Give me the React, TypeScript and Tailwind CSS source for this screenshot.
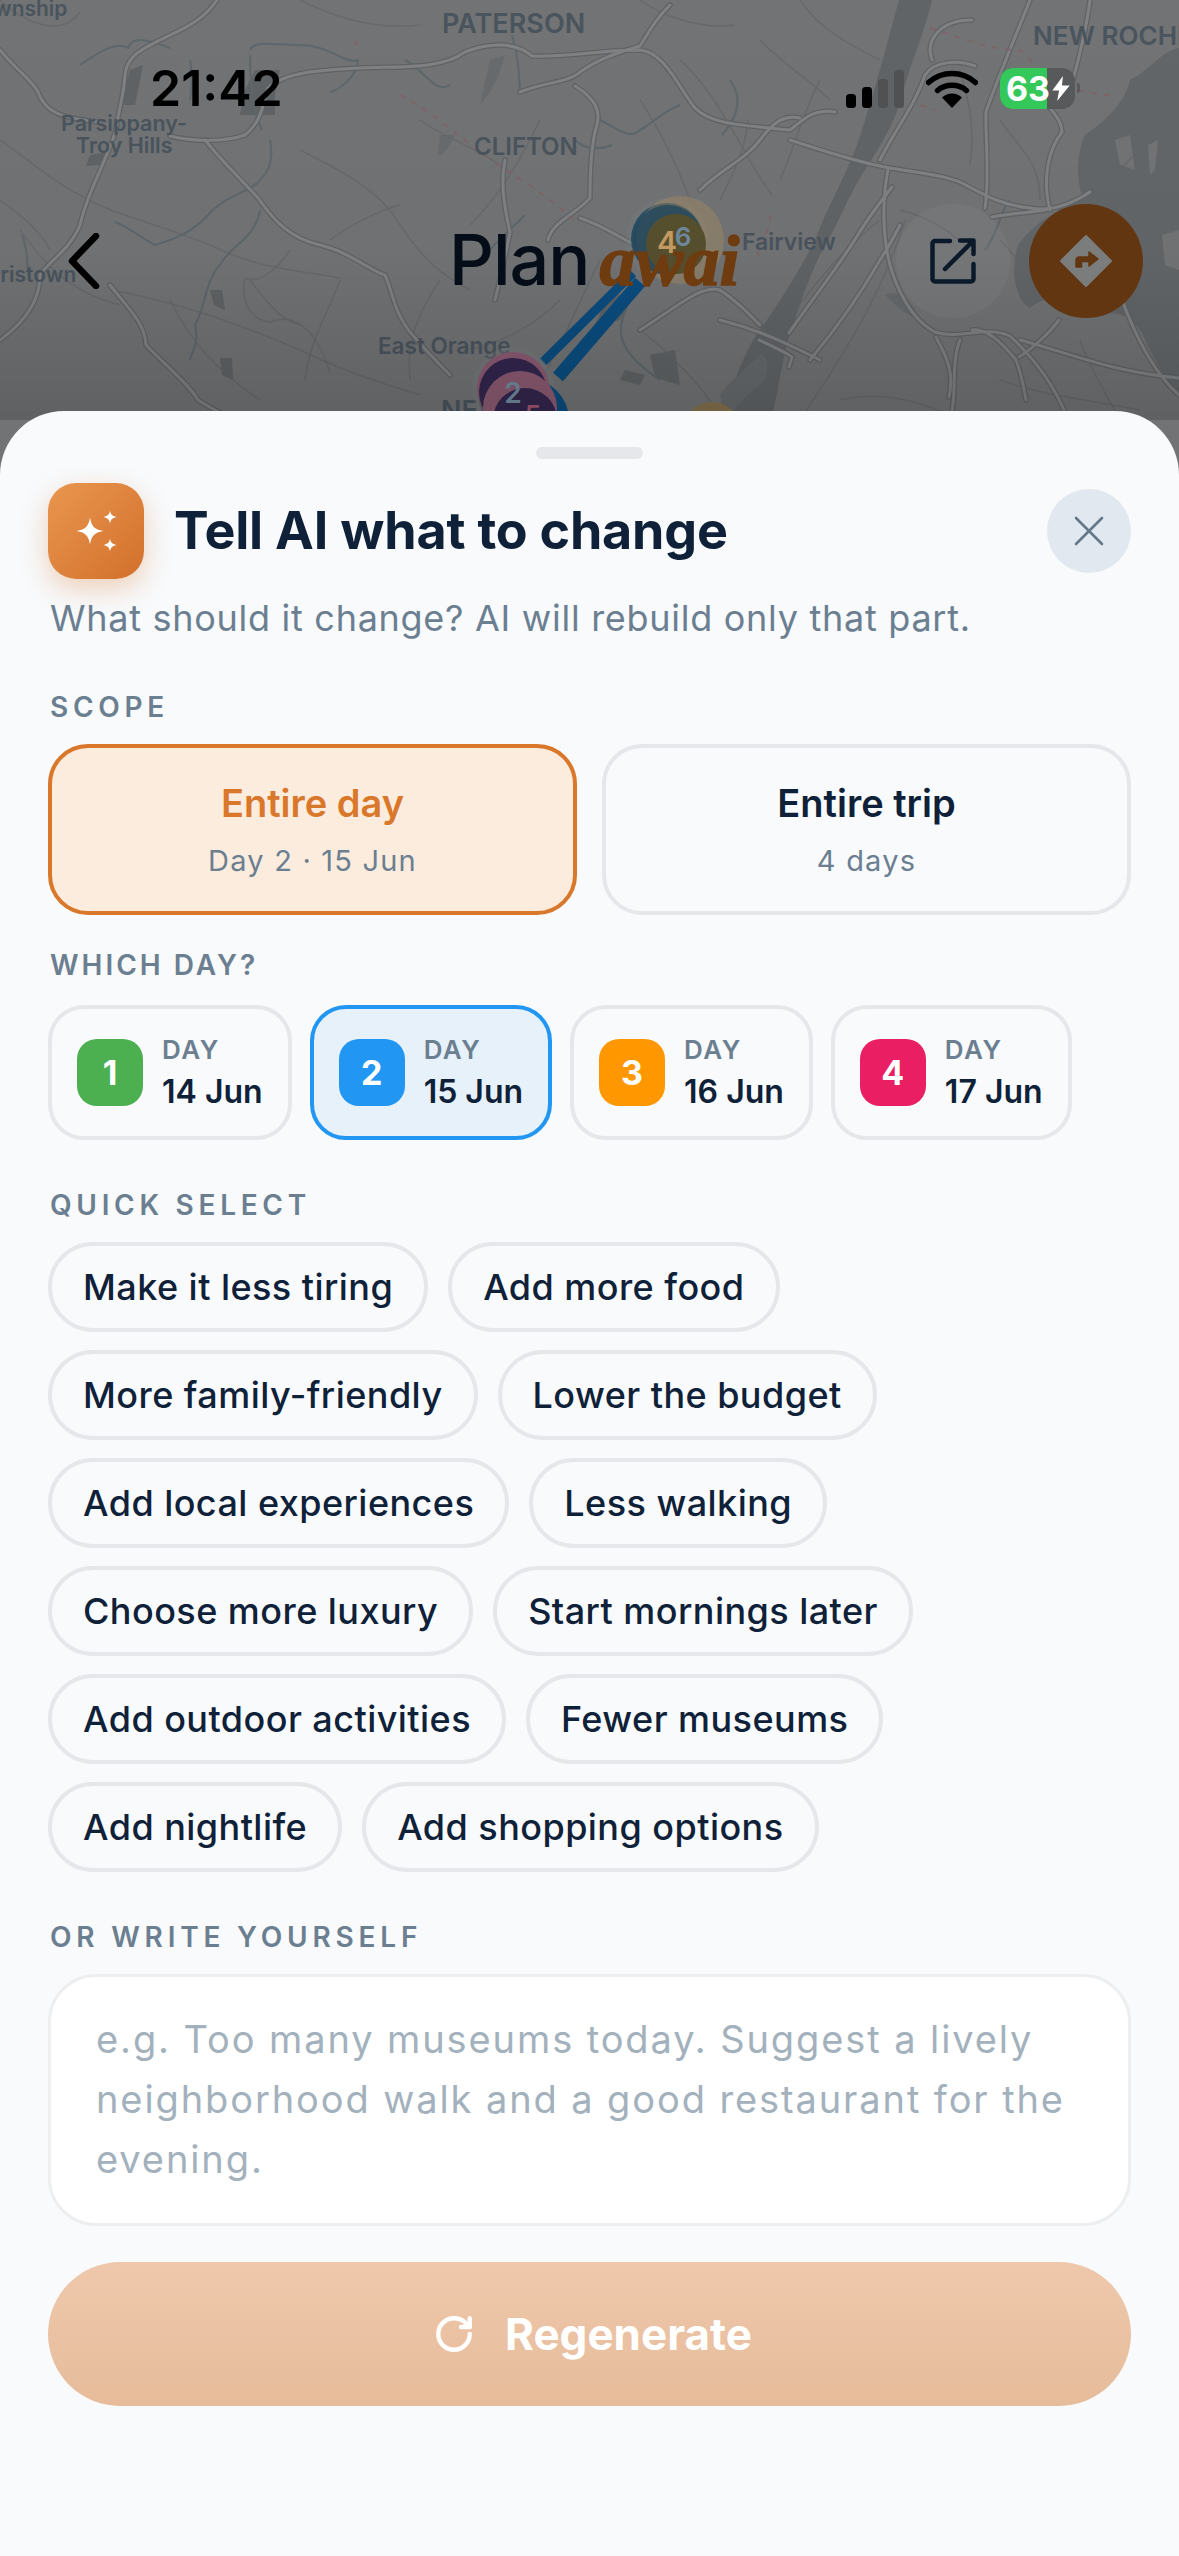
import { RotateCw, X } from 'lucide-react';

const font = { fontFamily: 'Inter, "Noto Sans", sans-serif' };

const days = [
  { n: 1, date: '14 Jun', badge: 'bg-[#4CAF50]' },
  { n: 2, date: '15 Jun', badge: 'bg-[#2196F3]', active: true },
  { n: 3, date: '16 Jun', badge: 'bg-[#FF9800]' },
  { n: 4, date: '17 Jun', badge: 'bg-[#E91E63]' },
];

const chips = [
  'Make it less tiring',
  'Add more food',
  'More family-friendly',
  'Lower the budget',
  'Add local experiences',
  'Less walking',
  'Choose more luxury',
  'Start mornings later',
  'Add outdoor activities',
  'Fewer museums',
  'Add nightlife',
  'Add shopping options',
];

// highways, drawn twice for the casing
const majorRoads = [
  'M217 0C205 18 190 26 160 40C140 50 127 56 125 75C124 95 118 112 116 130C105 165 88 190 80 225C70 250 48 262 40 275C40 300 25 322 0 340',
  'M0 50C18 72 32 80 38 92C45 112 60 118 100 122',
  'M170 136C195 142 225 142 245 135C262 122 264 100 268 88C285 72 320 70 360 68C400 66 440 70 465 52C490 42 515 42 532 56C560 58 600 50 640 50C665 52 680 90 695 108C710 124 740 125 790 130C805 118 815 108 835 112',
  'M205 140C225 165 240 178 258 198C275 222 290 238 320 245C350 252 372 272 385 275C392 290 394 312 410 332C425 350 445 370 450 375',
  'M110 285C125 305 145 322 146 345C165 365 190 385 198 400C210 408 220 412 232 420',
  'M520 92C545 82 570 82 580 72C600 58 620 52 640 46C650 30 655 20 670 5',
  'M575 86C595 98 602 112 596 128C590 150 590 180 590 198C575 215 552 222 548 240',
  'M505 160C500 185 505 210 510 232C505 260 500 280 495 300',
  'M580 218C610 228 630 245 650 252',
  'M790 140C815 148 850 160 880 166C905 172 935 172 960 182C985 195 1000 205 1030 208C1050 212 1070 205 1090 192',
  'M880 160C895 130 915 105 925 75C935 60 960 60 975 66',
  'M888 170C882 200 882 240 892 272C900 295 912 320 935 332C960 340 985 325 1010 336C1035 360 1055 385 1068 420',
  'M985 208C990 175 985 135 986 112C995 85 1010 50 1030 0',
  'M1050 210C1042 180 1048 150 1062 132C1062 120 1052 112 1048 105',
  'M700 190C720 170 745 160 760 140C775 120 785 115 800 118',
  'M720 320C760 330 790 345 820 360',
  'M960 340C950 365 958 395 950 420',
  'M1122 300C1135 335 1155 375 1179 395',
  'M1020 340C1060 350 1110 372 1179 378',
  'M932 60C925 40 940 20 972 20',
  'M992 217C1010 214 1030 212 1046 210',
  'M936 337C945 355 955 370 949 397',
  'M972 330C985 328 1000 340 1016 360C1022 375 1024 390 1026 400',
  'M1019 357C1030 350 1048 335 1059 320',
  'M759 340C770 345 785 352 792 357L789 367',
  'M789 333C815 295 840 265 859 233C870 215 882 200 892 187',
  'M810 360C835 330 860 295 880 260C890 245 895 235 900 225',
  'M640 330C680 305 700 285 720 290C735 300 745 310 760 325',
  'M1090 0C1085 40 1075 70 1068 100',
];

const minorRoads = [
  'M0 140C30 160 50 180 80 195C100 210 160 225 210 245C260 270 300 270 340 278',
  'M110 290C170 300 230 320 300 350C330 365 370 380 420 395',
  'M245 278C240 300 250 320 270 322C300 310 320 340 330 372',
  'M290 250C280 265 262 285 245 278',
  'M680 60C720 95 745 160 772 195',
  'M600 260C580 300 560 350 535 390',
  'M640 330C660 345 710 390 720 420',
  'M820 80C800 120 790 160 780 180',
  'M760 360C800 300 840 250 880 220',
  'M800 420C840 360 880 300 905 220',
  'M1000 240C1020 260 1040 290 1045 300',
  'M1000 120C1020 150 1040 160 1040 200',
  'M1080 340C1090 370 1110 400 1120 420',
  'M0 0C20 20 60 40 80 12',
  'M300 0C340 20 380 30 420 25',
  'M440 280C420 310 405 340 410 380',
  'M20 230C35 250 60 290 120 305',
  'M840 400C880 390 920 400 960 420',
  'M300 150C340 170 380 190 400 225C420 255 440 275 470 290',
  'M330 240C350 225 380 210 400 205',
  'M250 280C265 300 280 320 300 325',
  'M340 280C325 320 310 340 305 380',
  'M420 120C440 135 470 145 500 165',
  'M640 100C660 130 675 160 690 200',
  'M720 200C735 170 745 150 748 120',
  'M760 40C790 70 810 80 830 100',
  'M800 0C820 30 850 45 880 60',
  'M960 70C970 105 975 130 970 165',
  'M900 210C920 215 945 225 970 250',
  'M1100 200C1110 175 1125 165 1140 150',
  'M1000 380C1040 395 1090 400 1140 410',
  'M640 0C660 15 700 30 735 25',
  'M540 120C525 150 505 190 470 225',
  'M0 200C15 210 40 230 50 250',
  'M170 300C190 340 215 370 260 400',
  'M560 300C530 330 495 345 465 350',
];

const rivers = [
  'M80 65C95 55 115 40 128 48C132 35 150 40 170 48',
  'M250 50C255 40 270 45 300 45C330 45 345 65 358 60C358 75 340 90 330 92',
  'M250 55C250 80 252 110 262 130',
  'M190 60C192 70 192 90 190 100',
  'M270 140C275 165 265 175 260 180C255 190 225 195 208 215C190 235 170 240 155 245C145 240 125 225 115 222',
  'M260 210C255 240 230 245 220 265C205 280 205 310 195 325C200 345 190 355 190 360',
  'M22 235C30 255 25 265 30 280',
  'M405 60C425 70 435 95 450 85',
  'M512 35C520 65 518 70 520 90',
  'M600 120C620 130 630 140 640 130C650 125 665 110 680 105',
  'M575 140C585 150 600 150 612 145',
  'M730 80C745 100 735 120 722 135',
  'M985 250C1000 230 1000 210 1010 200',
  'M525 215C510 230 498 240 480 260',
  'M630 300C615 330 615 350 660 380',
];

const dashes = [
  'M400 95C440 115 470 150 530 185C550 200 570 215 575 222',
  'M930 28C960 38 990 50 1020 50C1040 65 1040 85 1050 85C1080 90 1095 95 1110 95',
  'M355 40L358 48',
  'M770 215C770 240 750 255 760 255',
  'M920 105L935 110',
];

function MapBackdrop() {
  return (
    <svg viewBox="0 0 1179 420" className="absolute inset-0 w-[1179px] h-[420px]" style={font}>
      <defs>
        <linearGradient id="shade" x1="0" y1="0" x2="0" y2="1">
          <stop offset="0" stopColor="#000" stopOpacity="0" />
          <stop offset="0.6" stopColor="#000" stopOpacity="0.02" />
          <stop offset="1" stopColor="#000" stopOpacity="0.16" />
        </linearGradient>
      </defs>
      <rect width="1179" height="420" fill="#717375" />

      {/* Hudson and the sound */}
      <path
        fill="#606466"
        d="M899 0L932 0C925 30 912 60 905 85C898 115 885 140 868 165C848 195 838 225 820 255C805 285 795 320 785 350C780 380 775 400 772 420L722 420C732 385 745 350 760 330C778 305 800 270 815 240C830 200 850 170 862 130C875 90 888 40 899 0Z"
      />
      <path
        fill="#626668"
        d="M1179 48C1160 52 1150 70 1130 80C1125 105 1100 125 1085 135C1078 150 1075 175 1082 195C1072 205 1040 215 1018 245C1010 270 1015 300 1030 308C1050 290 1085 300 1100 310C1110 320 1130 300 1150 350C1160 370 1170 385 1179 395Z"
      />
      <path fill="#717375" d="M1115 140L1130 135L1135 170L1120 165ZM1148 145L1158 140L1155 170L1150 175ZM1179 230L1162 235L1165 265L1179 270Z" />
      <path fill="#5f6365" d="M130 70L143 65L135 105L120 105ZM255 70L280 70L275 95L275 115L240 115L245 90Z" />
      <path fill="#5f6365" d="M90 155L107 152L100 165L86 166ZM610 290L630 300L620 320L595 325ZM650 355L675 350L680 385L655 378ZM625 370L645 375L640 385L620 380Z" />
      <path fill="#5f6365" d="M210 290L222 290L225 310L214 305ZM220 358L232 358L233 380L222 375Z" />
      <path fill="#666a6c" d="M720 395C730 380 745 370 760 355C770 355 770 375 760 385C745 395 735 410 725 420Z" />
      <path fill="#666a6c" d="M885 295C895 290 910 295 920 320C905 315 895 305 885 295Z" />
      <path fill="#686b6d" d="M490 60L505 55C500 75 490 95 480 105ZM440 135L455 135C450 145 445 155 438 155Z" />

      {minorRoads.map(d => (
        <path key={d} d={d} fill="none" stroke="#64676a" strokeWidth="1.5" opacity="0.75" />
      ))}
      {rivers.map(d => (
        <path key={d} d={d} fill="none" stroke="#5d676c" strokeWidth="2" />
      ))}
      {majorRoads.map(d => (
        <path key={d} d={d} fill="none" stroke="#606366" strokeWidth="5.5" strokeLinecap="round" />
      ))}
      {majorRoads.map(d => (
        <path key={d} d={d} fill="none" stroke="#7f8183" strokeWidth="3" strokeLinecap="round" />
      ))}
      {dashes.map(d => (
        <path key={d} d={d} fill="none" stroke="#7f6468" strokeWidth="2" strokeDasharray="6 7" />
      ))}

      <g fill="#4a545d" fontWeight="600">
        <text x="-6" y="16" fontSize="21">wnship</text>
        <text x="442" y="33" fontSize="27">PATERSON</text>
        <text x="1033" y="45" fontSize="26">NEW ROCHE</text>
        <text x="930" y="0" fontSize="21">YONKERS</text>
        <text x="61" y="131" fontSize="21.500">Parsippany-</text>
        <text x="76" y="153" fontSize="21.500">Troy Hills</text>
        <text x="474" y="155" fontSize="24">CLIFTON</text>
        <text x="-8" y="282" fontSize="21">rristown</text>
        <text x="742" y="250" fontSize="23">Fairview</text>
        <text x="378" y="354" fontSize="22.500">East Orange</text>
        <text x="441" y="420" fontSize="27">NEWARK</text>
      </g>

      {/* route legs */}
      <path d="M543 362L633 273" stroke="#0a4d80" strokeWidth="9" />
      <path d="M558 377L640 282" stroke="#0a4d80" strokeWidth="13" />

      {/* upper stop cluster */}
      <circle cx="667" cy="239" r="41" fill="#7a7e80" opacity="0.35" />
      <circle cx="667" cy="239" r="36" fill="#294f66" />
      <circle cx="680" cy="240" r="44" fill="#b8925c" opacity="0.35" />
      <circle cx="668" cy="240" r="35" fill="#27495e" opacity="0.85" />
      <circle cx="676" cy="244" r="30" fill="#57502f" />
      <text x="683" y="246" fontSize="26" fontWeight="600" fill="#6f8ba0" textAnchor="middle">6</text>
      <text x="667" y="253" fontSize="30" fontWeight="600" fill="#c69c60" textAnchor="middle">4</text>

      {/* lower stop cluster */}
      <circle cx="712" cy="432" r="30" fill="#85704d" />
      <circle cx="513" cy="388" r="41" fill="#7a7e80" opacity="0.35" />
      <circle cx="513" cy="388" r="36" fill="#8b5a72" />
      <circle cx="513" cy="392" r="34" fill="#33264e" />
      <circle cx="528" cy="420" r="41" fill="#0a4d80" />
      <circle cx="520" cy="408" r="37" fill="#8b5a72" />
      <circle cx="525" cy="420" r="32" fill="#33264e" />
      <text x="513" y="403" fontSize="28" fontWeight="600" fill="#6f8ba0" textAnchor="middle">2</text>
      <text x="533" y="424" fontSize="26" fontWeight="600" fill="#a0566e" textAnchor="middle">5</text>

      <rect width="1179" height="420" fill="url(#shade)" />
    </svg>
  );
}

function StatusIcons() {
  return (
    <div className="flex items-center">
      <svg width="60" height="38" viewBox="0 0 60 38" className="mt-[2px]">
        <rect x="0" y="24" width="10" height="14" rx="3.500" fill="#000" />
        <rect x="16" y="17" width="10" height="21" rx="3.500" fill="#000" />
        <rect x="32" y="9" width="10" height="29" rx="3.500" fill="#4f5153" />
        <rect x="48" y="0" width="10" height="38" rx="3.500" fill="#4f5153" />
      </svg>
      <svg width="52" height="38" viewBox="0 0 52 38" className="ml-[20px] mt-[2px]">
        <path d="M2.500 12.500C16 .5 36 .5 49.500 12.500" fill="none" stroke="#000" strokeWidth="5.500" strokeLinecap="round" />
        <path d="M11.500 20.500C19.500 13.500 32.500 13.500 40.500 20.500" fill="none" stroke="#000" strokeWidth="5.500" strokeLinecap="round" />
        <path d="M16 27.500C22 22 30 22 36 27.500L26 38Z" fill="#000" />
      </svg>
      <div className="relative ml-[22px] flex h-[41px] w-[75px] overflow-hidden rounded-[13px] bg-[#57595b]">
        <div className="h-full w-[47px] bg-[#34C759]" />
        <span className="absolute left-[6px] top-0 text-[34px] leading-[41px] font-bold text-white" style={font}>63</span>
        <svg width="18" height="25" viewBox="0 0 18 26" className="absolute right-[5px] top-[8px]">
          <path d="M11 0L0 15H7L5 26L18 10H10Z" fill="#fff" />
        </svg>
      </div>
      <div className="ml-[2px] h-[10px] w-[3px] rounded-r-full bg-[#57595b]" />
    </div>
  );
}

function TopBar() {
  return (
    <div className="relative flex flex-col">
      <div className="mt-[67px] flex h-[42px] items-center justify-between pl-[150px] pr-[99px]">
        <span className="text-[50px] leading-[42px] font-semibold text-black" style={font}>21:42</span>
        <StatusIcons />
      </div>
      <div className="mt-[95px] flex h-[114px] items-center pl-[68px] pr-[36px]">
        <svg width="32" height="56" viewBox="0 0 32 56">
          <path d="M28 3L4 28L28 53" fill="none" stroke="#000" strokeWidth="6.500" strokeLinecap="round" strokeLinejoin="round" />
        </svg>
        <div className="ml-[349px] flex items-baseline">
          <span className="text-[70px] leading-none font-medium tracking-[-1px] text-[#040d18]" style={font}>Plan</span>
          <span
            className="ml-[10px] text-[72px] leading-none font-bold italic text-[#6f3c10] [-webkit-text-stroke:1.5px_#6f3c10]"
            style={{ fontFamily: '"Liberation Serif", serif' }}
          >
            awai
          </span>
        </div>
        <div className="ml-auto flex h-[114px] w-[114px] items-center justify-center rounded-full bg-white/[0.04]">
          <svg width="46" height="46" viewBox="0 0 46 46" fill="none" stroke="#0b1a2a" strokeWidth="4.500" strokeLinecap="round" strokeLinejoin="round">
            <path d="M20 3H5A2.500 2.500 0 0 0 2.500 5.500V41A2.500 2.500 0 0 0 5 43.500H41A2.500 2.500 0 0 0 43.500 41V26" />
            <path d="M15 31L43 3M30 2.500H43.500V16" />
          </svg>
        </div>
        <div className="ml-[19px] flex h-[114px] w-[114px] items-center justify-center rounded-full bg-[#633612]">
          <svg width="52" height="52" viewBox="0 0 52 52">
            <path d="M26 1L51 26L26 51L1 26Z" fill="#7b7c7c" stroke="#7b7c7c" strokeWidth="2" strokeLinejoin="round" />
            <path d="M16 32V25.500Q16 22 19.500 22H29V17L38 24L29 31V26.500H21.500V32Z" fill="#633612" stroke="#633612" strokeWidth="1.500" strokeLinejoin="round" />
          </svg>
        </div>
      </div>
    </div>
  );
}

function SectionLabel({ children, className }: { children: string; className: string }) {
  return (
    <div className={`pl-[2px] text-[28px] leading-[36px] font-semibold text-[#6b7f91] ${className}`}>
      {children}
    </div>
  );
}

// one large four-point star with two small ones to its right
function SparkleMark() {
  return (
    <svg width="48" height="48" viewBox="0 0 48 48" fill="#fff">
      <path d="M18 10.500C19.500 19 22 22.500 31.500 24C22 25.500 19.500 29 18 37.500C16.500 29 14 25.500 4.500 24C14 22.500 16.500 19 18 10.500Z" />
      <path d="M38 3.500C38.700 7.500 40 8.800 44.500 10C40 11.200 38.700 12.500 38 16.500C37.300 12.500 36 11.200 31.500 10C36 8.800 37.300 7.500 38 3.500Z" />
      <path d="M38 31.500C38.700 35.500 40 36.800 44.500 38C40 39.200 38.700 40.500 38 44.500C37.300 40.500 36 39.200 31.500 38C36 36.800 37.300 35.500 38 31.500Z" />
    </svg>
  );
}

export default function App() {
  return (
    <div className="relative flex h-[2556px] w-[1179px] flex-col overflow-hidden bg-[#717375]" style={font}>
      <MapBackdrop />
      <div className="h-[411px] shrink-0">
        <TopBar />
      </div>

      {/* bottom sheet */}
      <div className="relative flex flex-1 flex-col rounded-t-[64px] bg-[#f8fafc] px-[48px]">
        <div className="mx-auto mt-[36px] h-[12px] w-[107px] rounded-full bg-[#e5e7eb]" />

        <div className="mt-[24px] flex items-center">
          <div className="flex h-[96px] w-[96px] items-center justify-center rounded-[28px] bg-gradient-to-br from-[#e9964f] to-[#d2702a] shadow-[0_10px_28px_rgba(217,119,43,0.32)]">
            <SparkleMark />
          </div>
          <h1 className="ml-[30px] text-[52px] leading-[60px] font-bold tracking-[-0.2px] text-[#0f2138]">Tell AI what to change</h1>
          <div className="ml-auto flex h-[84px] w-[84px] items-center justify-center rounded-full bg-[#e2e8ef]">
            <X size={52} className="text-[#64788c]" strokeWidth={1.2} />
          </div>
        </div>

        <p className="mt-[16px] pl-[2px] text-[36px] leading-[46px] tracking-[0.72px] text-[#6b7f91]">
          What should it change? AI will rebuild only that part.
        </p>

        <SectionLabel className="mt-[48px] tracking-[4.700px]">SCOPE</SectionLabel>
        <div className="mt-[19px] flex gap-[25px]">
          <div className="flex h-[171px] flex-1 flex-col items-center justify-center rounded-[40px] border-4 border-[#d9772b] bg-[#fcecdd]">
            <span className="text-[38px] leading-[44px] font-semibold text-[#d9772b]">Entire day</span>
            <span className="mt-[18px] text-[29px] leading-[36px] tracking-[1.200px] text-[#6b7f91]">Day 2 · 15 Jun</span>
          </div>
          <div className="flex h-[171px] flex-1 flex-col items-center justify-center rounded-[40px] border-4 border-[#e5e7eb]">
            <span className="text-[38px] leading-[44px] font-semibold text-[#0f2138]">Entire trip</span>
            <span className="mt-[18px] text-[29px] leading-[36px] tracking-[1.200px] text-[#6b7f91]">4 days</span>
          </div>
        </div>

        <SectionLabel className="mt-[32px] tracking-[3px]">WHICH DAY?</SectionLabel>
        <div className="mt-[22px] flex gap-[18px]">
          {days.map(day => (
            <div
              key={day.n}
              className={`flex h-[135px] items-center rounded-[36px] border-4 px-[25px] ${
                day.active ? 'border-[#2196f3] bg-[#e6f1fa]' : 'border-[#e5e7eb]'
              }`}
            >
              <div className={`flex h-[67px] w-[66px] items-center justify-center rounded-[20px] text-[34px] font-bold text-white ${day.badge}`}>
                {day.n}
              </div>
              <div className="ml-[19px] flex flex-col">
                <span className="text-[26px] leading-[34px] font-semibold tracking-[1.500px] text-[#6b7f91]">DAY</span>
                <span className="mt-[4px] text-[32px] leading-[42px] font-semibold text-[#0f2138]">{day.date}</span>
              </div>
            </div>
          ))}
        </div>

        <SectionLabel className="mt-[47px] tracking-[4.700px]">QUICK SELECT</SectionLabel>
        <div className="mt-[19px] flex flex-wrap gap-x-[20px] gap-y-[18px]">
          {chips.map(chip => (
            <div
              key={chip}
              className="flex h-[90px] items-center rounded-full border-4 border-[#e5e7eb] px-[31px] text-[36px] font-medium tracking-[0.45px] text-[#0f2138]"
            >
              {chip}
            </div>
          ))}
        </div>

        <SectionLabel className="mt-[47px] tracking-[4.800px]">OR WRITE YOURSELF</SectionLabel>
        <div className="mt-[19px] h-[252px] rounded-[48px] border-[3px] border-[#eceef0] bg-white px-[45px] pt-[32px] text-[38px] leading-[60px] tracking-[1.900px] text-[#a3b1bd]">
          e.g. Too many museums today. Suggest a lively neighborhood walk and a good restaurant for the evening.
        </div>

        <div className="mt-[36px] flex h-[144px] items-center justify-center rounded-full bg-gradient-to-b from-[#efc8ac] to-[#e6bc9a] pl-[6px]">
          <RotateCw size={42} className="text-white" strokeWidth={2.5} />
          <span className="ml-[30px] text-[44px] font-bold text-white">Regenerate</span>
        </div>
      </div>
    </div>
  );
}
